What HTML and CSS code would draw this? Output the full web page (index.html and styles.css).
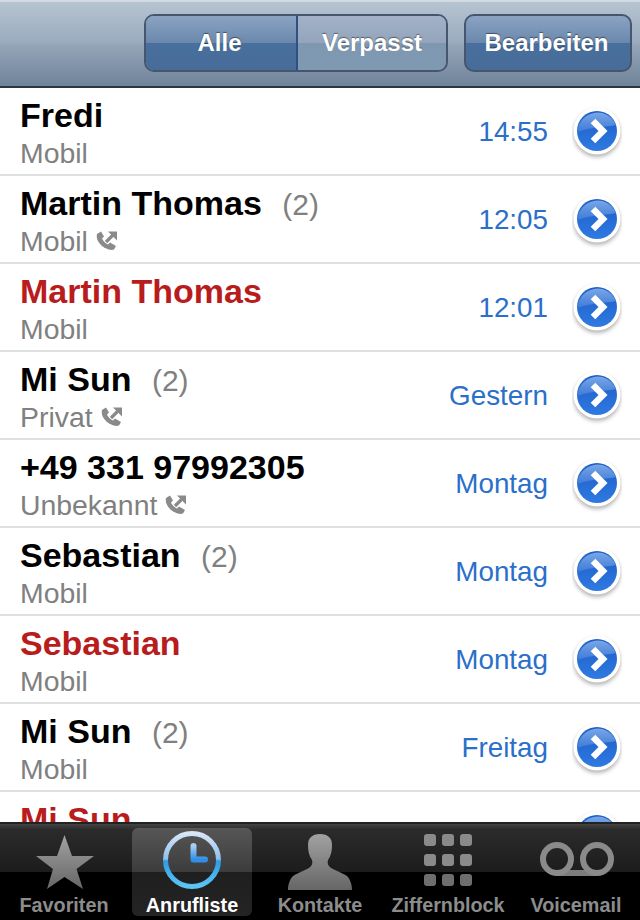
FILE: index.html
```html
<!DOCTYPE html>
<html>
<head>
  <meta charset="UTF-8">
  <title>Anrufliste</title>
  <link rel="stylesheet" href="styles.css">
</head>
<body>
  <svg class="defs" width="0" height="0">
    <defs>
      <linearGradient id="discGrad" x1="0" y1="0" x2="0" y2="1">
        <stop offset="0" stop-color="#1c5cc6"/>
        <stop offset="1" stop-color="#2f7ae2"/>
      </linearGradient>
      <linearGradient id="glossGrad" x1="0" y1="0" x2="0" y2="1">
        <stop offset="0" stop-color="#78a6e6"/>
        <stop offset="1" stop-color="#3f7ad8"/>
      </linearGradient>
      <filter id="discBlur" x="-30%" y="-30%" width="160%" height="160%">
        <feGaussianBlur stdDeviation="2"/>
      </filter>
      <linearGradient id="greyGrad" x1="0" y1="0" x2="0" y2="1">
        <stop offset="0" stop-color="#a2a2a2"/>
        <stop offset="1" stop-color="#666"/>
      </linearGradient>
      <symbol id="disclosure" viewBox="0 0 50 60">
        <circle cx="25" cy="32.5" r="23.5" fill="#000" opacity="0.3" filter="url(#discBlur)"/>
        <circle cx="25" cy="30" r="23.5" fill="#fff"/>
        <circle cx="25" cy="30" r="20" fill="url(#discGrad)"/>
        <path d="M5.5 31 A20 20 0 0 1 44 24 C34 26 20 26 5.5 31 Z" fill="url(#glossGrad)"/>
        <path d="M21 20 L31 30 L21 40" fill="none" stroke="#fff" stroke-width="6.4"/>
      </symbol>
      <symbol id="callback" viewBox="0 0 22 20">
        <path d="M1 3 L5 0.5 L8 5.5 L6 7.5 C7 10 9.5 12.5 12 13.5 L14 11.5 L20 15 L18 18.5 C14 20 8 17 5 14 C2 11 0 7 1 3 Z" fill="#8a8a8a"/>
        <path d="M12 0.5 H21 V9.5 Z" fill="#8a8a8a"/>
        <path d="M10 11 L17 4" fill="none" stroke="#8a8a8a" stroke-width="3.2"/>
      </symbol>
    </defs>
  </svg>

  <div class="screen">
    <header class="nav-bar">
      <div class="segmented">
        <div class="seg seg-on">Alle</div>
        <div class="seg seg-off">Verpasst</div>
      </div>
      <div class="edit-btn">Bearbeiten</div>
    </header>

    <div class="call-list">
      <div class="call-row">
        <div class="call-info">
          <div class="call-name">Fredi</div>
          <div class="call-type">Mobil</div>
        </div>
        <div class="call-time">14:55</div>
        <svg class="disc"><use href="#disclosure"/></svg>
      </div>
      <div class="call-row">
        <div class="call-info">
          <div class="call-name">Martin Thomas <span class="count">(2)</span></div>
          <div class="call-type">Mobil <svg class="cb"><use href="#callback"/></svg></div>
        </div>
        <div class="call-time">12:05</div>
        <svg class="disc"><use href="#disclosure"/></svg>
      </div>
      <div class="call-row missed">
        <div class="call-info">
          <div class="call-name">Martin Thomas</div>
          <div class="call-type">Mobil</div>
        </div>
        <div class="call-time">12:01</div>
        <svg class="disc"><use href="#disclosure"/></svg>
      </div>
      <div class="call-row">
        <div class="call-info">
          <div class="call-name">Mi Sun <span class="count">(2)</span></div>
          <div class="call-type">Privat <svg class="cb"><use href="#callback"/></svg></div>
        </div>
        <div class="call-time">Gestern</div>
        <svg class="disc"><use href="#disclosure"/></svg>
      </div>
      <div class="call-row">
        <div class="call-info">
          <div class="call-name">+49 331 97992305</div>
          <div class="call-type">Unbekannt <svg class="cb"><use href="#callback"/></svg></div>
        </div>
        <div class="call-time">Montag</div>
        <svg class="disc"><use href="#disclosure"/></svg>
      </div>
      <div class="call-row">
        <div class="call-info">
          <div class="call-name">Sebastian <span class="count">(2)</span></div>
          <div class="call-type">Mobil</div>
        </div>
        <div class="call-time">Montag</div>
        <svg class="disc"><use href="#disclosure"/></svg>
      </div>
      <div class="call-row missed">
        <div class="call-info">
          <div class="call-name">Sebastian</div>
          <div class="call-type">Mobil</div>
        </div>
        <div class="call-time">Montag</div>
        <svg class="disc"><use href="#disclosure"/></svg>
      </div>
      <div class="call-row">
        <div class="call-info">
          <div class="call-name">Mi Sun <span class="count">(2)</span></div>
          <div class="call-type">Mobil</div>
        </div>
        <div class="call-time">Freitag</div>
        <svg class="disc"><use href="#disclosure"/></svg>
      </div>
      <div class="call-row missed">
        <div class="call-info">
          <div class="call-name">Mi Sun</div>
          <div class="call-type">Mobil</div>
        </div>
        <div class="call-time">Freitag</div>
        <svg class="disc"><use href="#disclosure"/></svg>
      </div>
    </div>

    <nav class="tab-bar">
      <div class="tab">
        <svg class="tab-icon" viewBox="0 0 64 60">
          <path d="M32.5 5 L40 26 L62 26 L44.5 39 L51 59 L32.5 47 L15 59 L21 39 L4 26 L25 26 Z" fill="url(#greyGrad)"/>
        </svg>
        <span class="tab-label">Favoriten</span>
      </div>
      <div class="tab tab-on">
        <svg class="tab-icon" viewBox="0 0 64 60">
          <defs>
            <linearGradient id="ringGrad" x1="0" y1="0" x2="0" y2="1">
              <stop offset="0" stop-color="#d5e6f7"/>
              <stop offset="0.48" stop-color="#8fc0ec"/>
              <stop offset="0.52" stop-color="#2f9ae8"/>
              <stop offset="1" stop-color="#5cc4f5"/>
            </linearGradient>
            <linearGradient id="handGrad" x1="0" y1="0" x2="0" y2="1">
              <stop offset="0" stop-color="#a8cdf2"/>
              <stop offset="1" stop-color="#2f8fe6"/>
            </linearGradient>
          </defs>
          <circle cx="32" cy="30" r="26.5" fill="none" stroke="url(#ringGrad)" stroke-width="5"/>
          <path d="M33.5 16 V29.5 H45" fill="none" stroke="url(#handGrad)" stroke-width="6" stroke-linecap="round" stroke-linejoin="round"/>
        </svg>
        <span class="tab-label">Anrufliste</span>
      </div>
      <div class="tab">
        <svg class="tab-icon" viewBox="0 0 64 60">
          <path d="M32 4 C40 4 44 8 44 15 C44 21 43 26 40 30 C39 33 40 36 43 38 C48 41 55 43 59 46 C62 49 64 54 64 60 L0 60 C0 54 2 49 5 46 C9 43 16 41 21 38 C24 36 25 33 24 30 C21 26 20 21 20 15 C20 8 24 4 32 4 Z" fill="url(#greyGrad)"/>
        </svg>
        <span class="tab-label">Kontakte</span>
      </div>
      <div class="tab">
        <div class="keypad">
          <i></i><i></i><i></i>
          <i></i><i></i><i></i>
          <i class="low"></i><i class="low"></i><i class="low"></i>
        </div>
        <span class="tab-label">Ziffernblock</span>
      </div>
      <div class="tab">
        <svg class="tab-icon tab-icon-wide" viewBox="0 0 76 60">
          <rect x="19" y="40" width="40" height="6" fill="#7c7c7c"/>
          <circle cx="19" cy="29" r="14" fill="none" stroke="#8a8a8a" stroke-width="6"/>
          <circle cx="59" cy="29" r="14" fill="none" stroke="#8a8a8a" stroke-width="6"/>
        </svg>
        <span class="tab-label">Voicemail</span>
      </div>
    </nav>
  </div>
</body>
</html>
```

FILE: styles.css
```css
body {
  margin: 0;
  padding: 0;
  background: #fff;
  font-family: "Liberation Sans", Arial, sans-serif;
}
.defs {
  position: absolute;
}
.screen {
  width: 640px;
  height: 920px;
  display: flex;
  flex-direction: column;
  overflow: hidden;
}

/* nav bar */
.nav-bar {
  height: 88px;
  flex: none;
  box-sizing: border-box;
  display: flex;
  justify-content: flex-end;
  align-items: center;
  gap: 16px;
  padding: 0 8px 2px 0;
  background: linear-gradient(to bottom, #b6c3d1 0%, #9aaabd 50%, #95a6ba 50%, #6f8399 100%);
  border-top: 2px solid #d4dae1;
  border-bottom: 2px solid #2b3440;
}
.segmented {
  display: flex;
  width: 304px;
  height: 58px;
  box-sizing: border-box;
  border: 2px solid #46576d;
  border-radius: 10px;
  overflow: hidden;
}
.seg {
  display: flex;
  align-items: center;
  justify-content: center;
  color: #fff;
  font-size: 24px;
  font-weight: bold;
  text-shadow: 0 -1px 1px rgba(0,0,0,0.45);
}
.seg-on {
  width: 152px;
  box-sizing: border-box;
  padding-right: 3px;
  background: linear-gradient(to bottom, #8ba3c3 0%, #6a88ac 50%, #486f9d 50%, #486c99 100%);
  border-right: 2px solid #2e5180;
}
.seg-off {
  flex: 1;
  background: linear-gradient(to bottom, #a3b2c7 0%, #93a4bb 50%, #7f98b1 50%, #8099b3 100%);
}
.edit-btn {
  width: 168px;
  height: 58px;
  box-sizing: border-box;
  padding-right: 3px;
  display: flex;
  align-items: center;
  justify-content: center;
  border: 2px solid #46576d;
  border-radius: 10px;
  color: #fff;
  font-size: 24px;
  font-weight: bold;
  text-shadow: 0 -1px 1px rgba(0,0,0,0.45);
  background: linear-gradient(to bottom, #8ba3c3 0%, #6a88ac 50%, #486f9d 50%, #486c99 100%);
}

/* list */
.call-list {
  flex: 1;
  min-height: 0;
  overflow: hidden;
}
.call-row {
  height: 88px;
  box-sizing: border-box;
  display: flex;
  align-items: center;
  padding: 0 18px 0 20px;
  border-bottom: 2px solid #e0e0e0;
}
.call-info {
  flex: 1;
  padding-top: 3px;
}
.call-name {
  font-size: 34px;
  line-height: 40px;
  font-weight: bold;
  color: #000;
  white-space: nowrap;
}
.missed .call-name {
  color: #b81c1c;
}
.count {
  font-weight: normal;
  font-size: 30px;
  line-height: 0;
  color: #808080;
  margin-left: 11px;
}
.call-type {
  margin-top: 1px;
  font-size: 28.4px;
  line-height: 34px;
  color: #808080;
  display: flex;
  align-items: center;
  gap: 8px;
}
.cb {
  width: 22px;
  height: 20px;
  margin-top: -1px;
}
.call-time {
  font-size: 27.8px;
  color: #2a6fc9;
  margin-right: 24px;
  padding-top: 2px;
}
.disc {
  width: 50px;
  height: 60px;
  flex: none;
}

/* tab bar */
.tab-bar {
  height: 98px;
  flex: none;
  box-sizing: border-box;
  display: flex;
  padding: 4px 4px 4px;
  gap: 8px;
  border-top: 2px solid #222;
  background: linear-gradient(to bottom, #444 0%, #2b2b2b 6%, #1c1c1c 50%, #000 50%, #000 100%);
}
.tab {
  flex: 1;
  display: flex;
  flex-direction: column;
  align-items: center;
  justify-content: space-between;
  border-radius: 6px;
}
.tab-on {
  background: linear-gradient(to bottom, rgba(255,255,255,0.2) 0%, rgba(255,255,255,0.14) 50%, rgba(255,255,255,0.12) 50%, rgba(255,255,255,0.14) 100%);
}
.tab-icon {
  width: 64px;
  height: 60px;
  margin-top: 2px;
}
.tab-icon-wide {
  width: 76px;
}
.tab-label {
  font-size: 19.8px;
  line-height: 22px;
  font-weight: bold;
  color: #8c8c8c;
  white-space: nowrap;
}
.tab-on .tab-label {
  color: #fff;
}
.keypad {
  display: grid;
  grid-template-columns: repeat(3, 12px);
  grid-auto-rows: 12px;
  gap: 8px 6px;
  margin-top: 6px;
}
.keypad i {
  background: #8a8a8a;
  border-radius: 3px;
}
.keypad .low {
  background: #6e6e6e;
}
```
